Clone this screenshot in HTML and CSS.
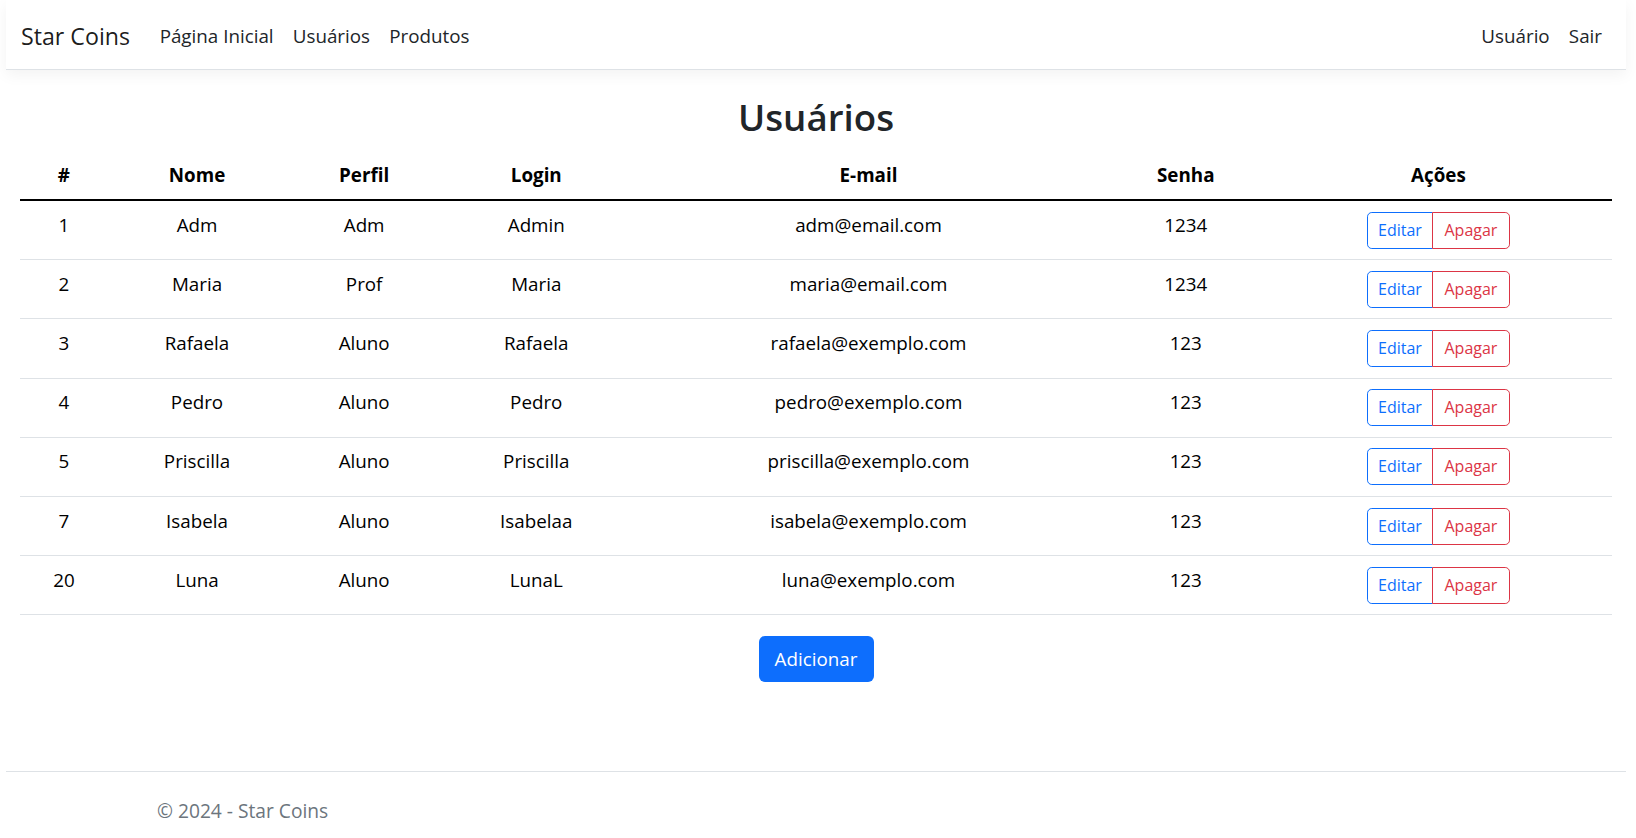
FILE: index.html
```html
<!DOCTYPE html>
<html lang="pt-BR">
<head>
<meta charset="utf-8">
<title>Usuários - Star Coins</title>
<link rel="stylesheet" href="styles.css">
</head>
<body>
<div class="page">
  <nav class="navbar">
    <div class="nav-inner">
      <a class="brand" href="#">Star Coins</a>
      <ul class="nav-list">
        <li><a class="nav-link" href="#">Página Inicial</a></li>
        <li><a class="nav-link" href="#">Usuários</a></li>
        <li><a class="nav-link" href="#">Produtos</a></li>
      </ul>
      <ul class="nav-list nav-right">
        <li><a class="nav-link" href="#">Usuário</a></li>
        <li><a class="nav-link" href="#">Sair</a></li>
      </ul>
    </div>
  </nav>

  <main class="content">
    <h1 class="title">Usuários</h1>
    <table class="users">
      <colgroup>
        <col class="c-id"><col class="c-nome"><col class="c-perfil"><col class="c-login"><col class="c-email"><col class="c-senha"><col class="c-acoes">
      </colgroup>
      <thead>
        <tr><th>#</th><th>Nome</th><th>Perfil</th><th>Login</th><th>E-mail</th><th>Senha</th><th>Ações</th></tr>
      </thead>
      <tbody>
        <tr><td>1</td><td>Adm</td><td>Adm</td><td>Admin</td><td>adm@email.com</td><td>1234</td><td><div class="btn-group"><a class="btn btn-edit" href="#">Editar</a><a class="btn btn-del" href="#">Apagar</a></div></td></tr>
        <tr><td>2</td><td>Maria</td><td>Prof</td><td>Maria</td><td>maria@email.com</td><td>1234</td><td><div class="btn-group"><a class="btn btn-edit" href="#">Editar</a><a class="btn btn-del" href="#">Apagar</a></div></td></tr>
        <tr><td>3</td><td>Rafaela</td><td>Aluno</td><td>Rafaela</td><td>rafaela@exemplo.com</td><td>123</td><td><div class="btn-group"><a class="btn btn-edit" href="#">Editar</a><a class="btn btn-del" href="#">Apagar</a></div></td></tr>
        <tr><td>4</td><td>Pedro</td><td>Aluno</td><td>Pedro</td><td>pedro@exemplo.com</td><td>123</td><td><div class="btn-group"><a class="btn btn-edit" href="#">Editar</a><a class="btn btn-del" href="#">Apagar</a></div></td></tr>
        <tr><td>5</td><td>Priscilla</td><td>Aluno</td><td>Priscilla</td><td>priscilla@exemplo.com</td><td>123</td><td><div class="btn-group"><a class="btn btn-edit" href="#">Editar</a><a class="btn btn-del" href="#">Apagar</a></div></td></tr>
        <tr><td>7</td><td>Isabela</td><td>Aluno</td><td>Isabelaa</td><td>isabela@exemplo.com</td><td>123</td><td><div class="btn-group"><a class="btn btn-edit" href="#">Editar</a><a class="btn btn-del" href="#">Apagar</a></div></td></tr>
        <tr><td>20</td><td>Luna</td><td>Aluno</td><td>LunaL</td><td>luna@exemplo.com</td><td>123</td><td><div class="btn-group"><a class="btn btn-edit" href="#">Editar</a><a class="btn btn-del" href="#">Apagar</a></div></td></tr>
      </tbody>
    </table>
    <div class="add-wrap">
      <a class="btn-add" href="#">Adicionar</a>
    </div>
  </main>

  <footer class="footer">
    <div class="footer-inner">&copy; 2024 - Star Coins</div>
  </footer>
</div>
</body>
</html>
```

FILE: styles.css
```css
html, body {
  margin: 0;
  padding: 0;
  background: #ffffff;
}

body {
  font-family: "Open Sans", "Noto Sans", "Liberation Sans", sans-serif;
  font-size: 18.8px;
  color: #212529;
  overflow: hidden;
  height: 838px;
}

.page {
  margin: 0 10px 0 6px;
  background: #ffffff;
}

a {
  text-decoration: none;
}

/* Navbar */
.navbar {
  height: 69px;
  border-bottom: 1px solid #dee2e6;
  box-shadow: 0 5px 14px rgba(0, 0, 0, 0.05);
  background: #fff;
}

.nav-inner {
  height: 100%;
  display: flex;
  align-items: center;
  padding: 3px 14.4px 0 15px;
  box-sizing: border-box;
}

.brand {
  font-size: 23.2px;
  color: rgba(0, 0, 0, 0.9);
  margin-right: 20px;
  line-height: 36px;
}

.nav-list {
  list-style: none;
  margin: 0;
  padding: 0;
  display: flex;
}

.nav-right {
  margin-left: auto;
}

.nav-link {
  display: block;
  padding: 9.6px 9.6px;
  line-height: 28.8px;
  color: #212529;
  font-size: 18.8px;
}

/* Content */
.content {
  padding: 0 14.4px;
}

.title {
  margin: 24px 0 11px;
  text-align: center;
  font-size: 36.7px;
  line-height: 46px;
  font-weight: 600;
  color: #212529;
}

.users {
  width: 100%;
  border-collapse: collapse;
  color: #000;
  margin-bottom: 21px;
}

.c-id { width: 87px; }
.c-nome { width: 179px; }
.c-perfil { width: 155px; }
.c-login { width: 189px; }
.c-email { width: 475px; }
.c-senha { width: 159px; }
.c-acoes { width: 346px; }

.users th {
  font-weight: 700;
  text-align: center;
  padding: 9.6px;
  line-height: 28.8px;
  border-bottom: 2px solid #000;
}

.users td {
  text-align: center;
  vertical-align: top;
  padding: 9.6px;
  line-height: 28.8px;
  height: 39px;
  box-sizing: content-box;
  border-bottom: 1px solid #dee2e6;
}

.btn-group {
  display: inline-flex;
  margin-top: 1px;
}

.btn {
  display: block;
  height: 37px;
  box-sizing: border-box;
  line-height: 35px;
  font-size: 16px;
  text-align: center;
  border: 1px solid;
  background: #fff;
}

.btn-edit {
  width: 66px;
  color: #0d6efd;
  border-color: #0d6efd;
  border-radius: 4.8px 0 0 4.8px;
}

.btn-del {
  width: 78px;
  margin-left: -1px;
  color: #dc3545;
  border-color: #dc3545;
  border-radius: 0 4.8px 4.8px 0;
  position: relative;
}

.add-wrap {
  display: flex;
  justify-content: center;
}

.btn-add {
  display: block;
  width: 115px;
  height: 46px;
  box-sizing: border-box;
  line-height: 46px;
  text-align: center;
  background: #0d6efd;
  color: #fff;
  font-size: 18.8px;
  border-radius: 6px;
}

/* Footer */
.footer {
  margin-top: 89px;
  padding-top: 3px;
  border-top: 1px solid #dee2e6;
  line-height: 72px;
  color: #6c757d;
  font-size: 19.2px;
  white-space: nowrap;
}

.footer-inner {
  padding-left: 151px;
}
```
